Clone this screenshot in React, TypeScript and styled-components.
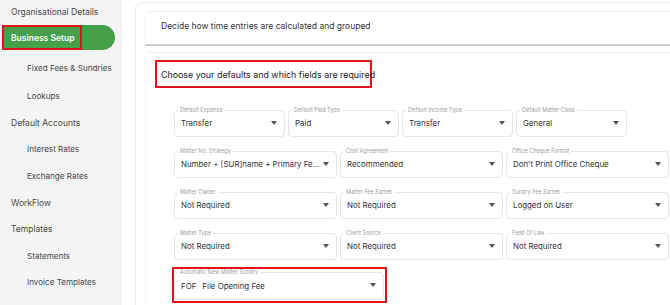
import styled, { createGlobalStyle } from "styled-components";

const GlobalStyle = createGlobalStyle`
  html, body {
    margin: 0;
    padding: 0;
    width: 670px;
    height: 305px;
    overflow: hidden;
    background: #ffffff;
    font-family: Inter, "Open Sans", sans-serif;
  }
`;

const Page = styled.div`
  display: flex;
  width: 670px;
  height: 305px;
  overflow: hidden;
`;

const Sidebar = styled.nav`
  flex: 0 0 122px;
  background: #f4f4f4;
  display: flex;
  flex-direction: column;
`;

const NavItem = styled.div<{ $sub?: boolean; $h: number }>`
  height: ${p => p.$h}px;
  flex-shrink: 0;
  display: flex;
  align-items: center;
  padding-left: ${p => (p.$sub ? 27 : 11)}px;
  font-size: ${p => (p.$sub ? 8.1 : 8.5)}px;
  color: #484848;
  white-space: nowrap;
`;

const ActivePill = styled.div`
  margin: 2px 7px 3px 2px;
  height: 25px;
  flex-shrink: 0;
  background: #46a049;
  border-radius: 0 13px 13px 0;
  display: flex;
  align-items: center;
`;

const Highlight = styled.span`
  height: 25px;
  box-sizing: border-box;
  border: 2px solid #e3131b;
  display: flex;
  align-items: center;
  padding: 0 6px 0 7px;
  color: #fff;
  font-size: 8.5px;
  font-weight: 600;
  white-space: nowrap;
`;

const Main = styled.main`
  flex: 1;
  padding: 2px 0 0 13px;
`;

const OuterCard = styled.div`
  width: 560px;
  height: 320px;
  border: 1px solid #eeeeee;
  border-radius: 6px;
  padding: 8px 0 0 9px;
  box-sizing: border-box;
`;

const HeaderCard = styled.div`
  height: 32px;
  box-sizing: content-box;
  border-radius: 5px 0 0 0;
  border-top: 1px solid #f2f2f2;
  border-left: 1px solid #f2f2f2;
  border-bottom: 2px solid #cccccc;
  display: flex;
  align-items: center;
  padding: 0 0 0 15px;
  font-size: 8.5px;
  color: #333;
  line-height: 1;
  & > span {
    margin-top: -4px;
  }
`;

const SectionCard = styled.section`
  margin-top: 6px;
  border-top: 1px solid #f0f0f0;
  border-left: 1px solid #f6f6f6;
  border-radius: 5px 0 0 0;
  padding: 7px 0 0 9px;
`;

const TitleBox = styled.div`
  width: 217px;
  height: 28px;
  box-sizing: border-box;
  border: 2px solid #e3131b;
  display: flex;
  align-items: center;
  padding-left: 4px;
  font-size: 8.9px;
  color: #222;
  white-space: nowrap;
`;

const Form = styled.div`
  margin-top: 19px;
  padding-left: 19px;
  display: flex;
  flex-direction: column;
  gap: 11px;
`;

const Row = styled.div<{ $cols: number; $w: number }>`
  display: grid;
  grid-template-columns: repeat(${p => p.$cols}, ${p => p.$w}px);
  gap: 3px;
`;

const Field = styled.fieldset<{ $tall?: boolean }>`
  margin: 0;
  height: ${p => (p.$tall ? 31 : 30)}px;
  box-sizing: border-box;
  border: 1px solid #e6e6e6;
  border-radius: 4px;
  padding: 0 7px 0 6px;
  display: flex;
  align-items: center;
  min-width: 0;
`;

const Legend = styled.legend`
  font-size: 5.5px;
  color: #a0a0a0;
  padding: 0 2px;
  margin-left: -3px;
  line-height: 6px;
`;

const Value = styled.span`
  flex: 1;
  min-width: 0;
  font-size: 7.9px;
  color: #333;
  white-space: nowrap;
  margin-top: -3px;
`;

const Caret = styled.span`
  flex-shrink: 0;
  width: 0;
  height: 0;
  border-left: 3.5px solid transparent;
  border-right: 3.5px solid transparent;
  border-top: 4px solid #555;
  margin-left: 3px;
  margin-top: -4px;
`;

const SundryBox = styled.div`
  width: 215px;
  box-sizing: border-box;
  border: 2px solid #e3131b;
  padding: 0 1px 1px 0;
  margin: -4px 0 0 -2px;
`;

const Code = styled.span`
  margin-right: 6px;
`;

type SelectProps = { label: string; value: React.ReactNode; tall?: boolean };

function Select({ label, value, tall }: SelectProps) {
  return (
    <Field $tall={tall}>
      <Legend>{label}</Legend>
      <Value>{value}</Value>
      <Caret />
    </Field>
  );
}

const nav = [
  { label: "Fixed Fees & Sundries", sub: true, h: 30 },
  { label: "Lookups", sub: true, h: 26.6 },
  { label: "Default Accounts", h: 26.6 },
  { label: "Interest Rates", sub: true, h: 26.6 },
  { label: "Exchange Rates", sub: true, h: 26.6 },
  { label: "WorkFlow", h: 26.6 },
  { label: "Templates", h: 26.6 },
  { label: "Statements", sub: true, h: 26.6 },
  { label: "Invoice Templates", sub: true, h: 26.6 },
];

export default function App() {
  return (
    <Page>
      <GlobalStyle />
      <Sidebar>
        <NavItem $h={23}>Organisational Details</NavItem>
        <ActivePill>
          <Highlight>Business Setup</Highlight>
        </ActivePill>
        {nav.map(item => (
          <NavItem key={item.label} $sub={item.sub} $h={item.h}>
            {item.label}
          </NavItem>
        ))}
      </Sidebar>
      <Main>
        <OuterCard>
          <HeaderCard>
            <span>Decide how time entries are calculated and grouped</span>
          </HeaderCard>
          <SectionCard>
            <TitleBox>Choose your defaults and which fields are required</TitleBox>
            <Form>
              <Row $cols={4} $w={111}>
                <Select label="Default Expense" value="Transfer" />
                <Select label="Default Paid Type" value="Paid" />
                <Select label="Default Income Type" value="Transfer" />
                <Select label="Default Matter Class" value="General" />
              </Row>
              <Row $cols={3} $w={163}>
                <Select label="Matter No. Strategy" value="Number + [SUR]name + Primary Fe..." />
                <Select label="Cost Agreement" value="Recommended" />
                <Select label="Office Cheque Format" value="Don't Print Office Cheque" />
              </Row>
              <Row $cols={3} $w={163}>
                <Select label="Matter Owner" value="Not Required" />
                <Select label="Matter Fee Earner" value="Not Required" />
                <Select label="Sundry Fee Earner" value="Logged on User" />
              </Row>
              <Row $cols={3} $w={163}>
                <Select label="Matter Type" value="Not Required" />
                <Select label="Client Source" value="Not Required" />
                <Select label="Field Of Law" value="Not Required" />
              </Row>
              <SundryBox>
                <Select
                  tall
                  label="Automatic New Matter Sundry"
                  value={<><Code>FOF</Code>File Opening Fee</>}
                />
              </SundryBox>
            </Form>
          </SectionCard>
        </OuterCard>
      </Main>
    </Page>
  );
}
